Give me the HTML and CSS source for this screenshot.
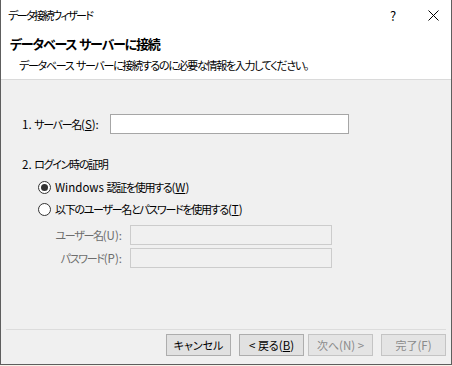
FILE: index.html
```html
<!DOCTYPE html>
<html lang="ja">
<head>
  <meta charset="UTF-8">
  <meta name="viewport" content="width=device-width, initial-scale=1.0">
  <title>データ接続ウィザード</title>
  <link rel="stylesheet" href="styles.css">
</head>
<body>
  <div class="window">
    <div class="titlebar">
      <span class="title">データ接続ウィザード</span>
      <span class="help">?</span>
      <span class="close">
        <svg width="11" height="11" viewBox="0 0 11 11">
          <path d="M0.5 0.5 L10.5 10.5 M10.5 0.5 L0.5 10.5" stroke="#000" stroke-width="1" fill="none"/>
        </svg>
      </span>
    </div>

    <div class="header">
      <h1>データベース<span class="en"> </span>サーバーに接続</h1>
      <p>データベース<span class="en"> </span>サーバーに接続するのに必要な情報を入力してください。</p>
    </div>

    <div class="content">
      <div class="row server-row">
        <label for="server"><span class="en">1. </span>サーバー名<span class="en">(<u>S</u>):</span></label>
        <input type="text" id="server" class="textbox server-box">
      </div>

      <div class="group-title"><span class="en">2. </span>ログイン時の証明</div>
      <div class="radio-row">
        <span class="radio checked"></span>
        <span><span class="en">Windows </span>認証を使用する<span class="en">(<u>W</u>)</span></span>
      </div>
      <div class="radio-row">
        <span class="radio"></span>
        <span>以下のユーザー名とパスワードを使用する<span class="en">(<u>T</u>)</span></span>
      </div>

      <div class="row cred-row first">
        <label class="cred-label">ユーザー名<span class="en">(U):</span></label>
        <input type="text" class="textbox cred-box" disabled>
      </div>
      <div class="row cred-row">
        <label class="cred-label">パスワード<span class="en">(P):</span></label>
        <input type="password" class="textbox cred-box" disabled>
      </div>
    </div>

    <div class="footer">
      <div class="buttons">
        <button class="button">キャンセル</button>
        <button class="button back"><span class="en">&lt; </span>戻る<span class="en">(<u>B</u>)</span></button>
        <button class="button pair" disabled>次へ<span class="en">(N) &gt;</span></button>
        <button class="button finish" disabled>完了<span class="en">(F)</span></button>
      </div>
    </div>
  </div>
</body>
</html>
```

FILE: styles.css
```css
html {
  background: #f7f3e8;
}
body {
  margin: 0;
  padding: 0;
  font-family: "Noto Sans CJK JP", "Noto Sans", sans-serif;
  font-size: 11px;
  letter-spacing: -1.3px;
  font-feature-settings: "palt";
  color: #000;
}
.en {
  letter-spacing: 0;
  font-size: 11.5px;
}
.window {
  width: 452px;
  height: 365px;
  box-sizing: border-box;
  border: 1px solid #5e5e5e;
  border-top: none;
  background: #f0f0f0;
  display: flex;
  flex-direction: column;
}
.titlebar {
  height: 30px;
  background: #fff;
  display: flex;
  align-items: center;
  padding-left: 7px;
}
.title {
  flex: 1;
  letter-spacing: -1.7px;
}
.help {
  width: 40px;
  text-align: center;
  font-size: 13px;
  letter-spacing: 0;
}
.close {
  width: 40px;
  display: flex;
  justify-content: center;
  align-items: center;
  margin-right: -2px;
}
.header {
  height: 49px;
  background: #fff;
  border-bottom: 1px solid #dadada;
}
.header h1 {
  margin: 0;
  padding: 3px 0 0 9px;
  font-size: 13px;
  letter-spacing: -1.2px;
  font-weight: bold;
  line-height: 22px;
}
.header p {
  margin: 0;
  padding: 0 0 0 18px;
  line-height: 20px;
}
.content {
  flex: 1;
  padding: 34px 0 0 21px;
}
.row {
  display: flex;
  align-items: center;
  height: 20px;
}
.server-row label {
  width: 88px;
  flex: none;
  white-space: nowrap;
}
.textbox {
  box-sizing: border-box;
  height: 20px;
  margin: 0;
  border: 1px solid #a6a6a6;
  background: #fff;
  font: inherit;
  padding: 0 3px;
}
.server-box {
  width: 239px;
}
.group-title {
  margin-top: 20px;
  height: 20px;
  line-height: 20px;
  margin-bottom: 2px;
}
.radio-row {
  display: flex;
  align-items: center;
  height: 22px;
  padding-left: 16px;
  white-space: nowrap;
}
.radio {
  width: 13px;
  height: 13px;
  box-sizing: border-box;
  border: 1px solid #333;
  border-radius: 50%;
  background: #fff;
  margin-right: 4px;
  position: relative;
  flex: none;
}
.radio.checked::after {
  content: "";
  position: absolute;
  left: 2px;
  top: 2px;
  width: 7px;
  height: 7px;
  border-radius: 50%;
  background: #333;
}
.cred-row {
  margin-top: 3px;
}
.cred-row.first {
  margin-top: 5px;
}
.cred-label {
  width: 100px;
  flex: none;
  white-space: nowrap;
  text-align: right;
  color: #6d6d6d;
  padding-right: 8px;
}
.cred-box {
  width: 202px;
  background: #f0f0f0;
  border-color: #cccccc;
}
.footer {
  height: 34px;
  margin: 0 5px 0 5px;
  border-top: 1px solid #dcdcdc;
}
.buttons {
  display: flex;
  justify-content: flex-end;
  padding-top: 4px;
}
.button {
  width: 65px;
  height: 22px;
  box-sizing: border-box;
  background: #e1e1e1;
  border: 1px solid #adadad;
  font: inherit;
  color: #000;
  padding: 0;
  margin-left: 8px;
}
.button.pair {
  margin-left: 4px;
}
.button:disabled {
  color: #8a8a8a;
  border-color: #c4c4c4;
  background: #e4e4e4;
}
```
